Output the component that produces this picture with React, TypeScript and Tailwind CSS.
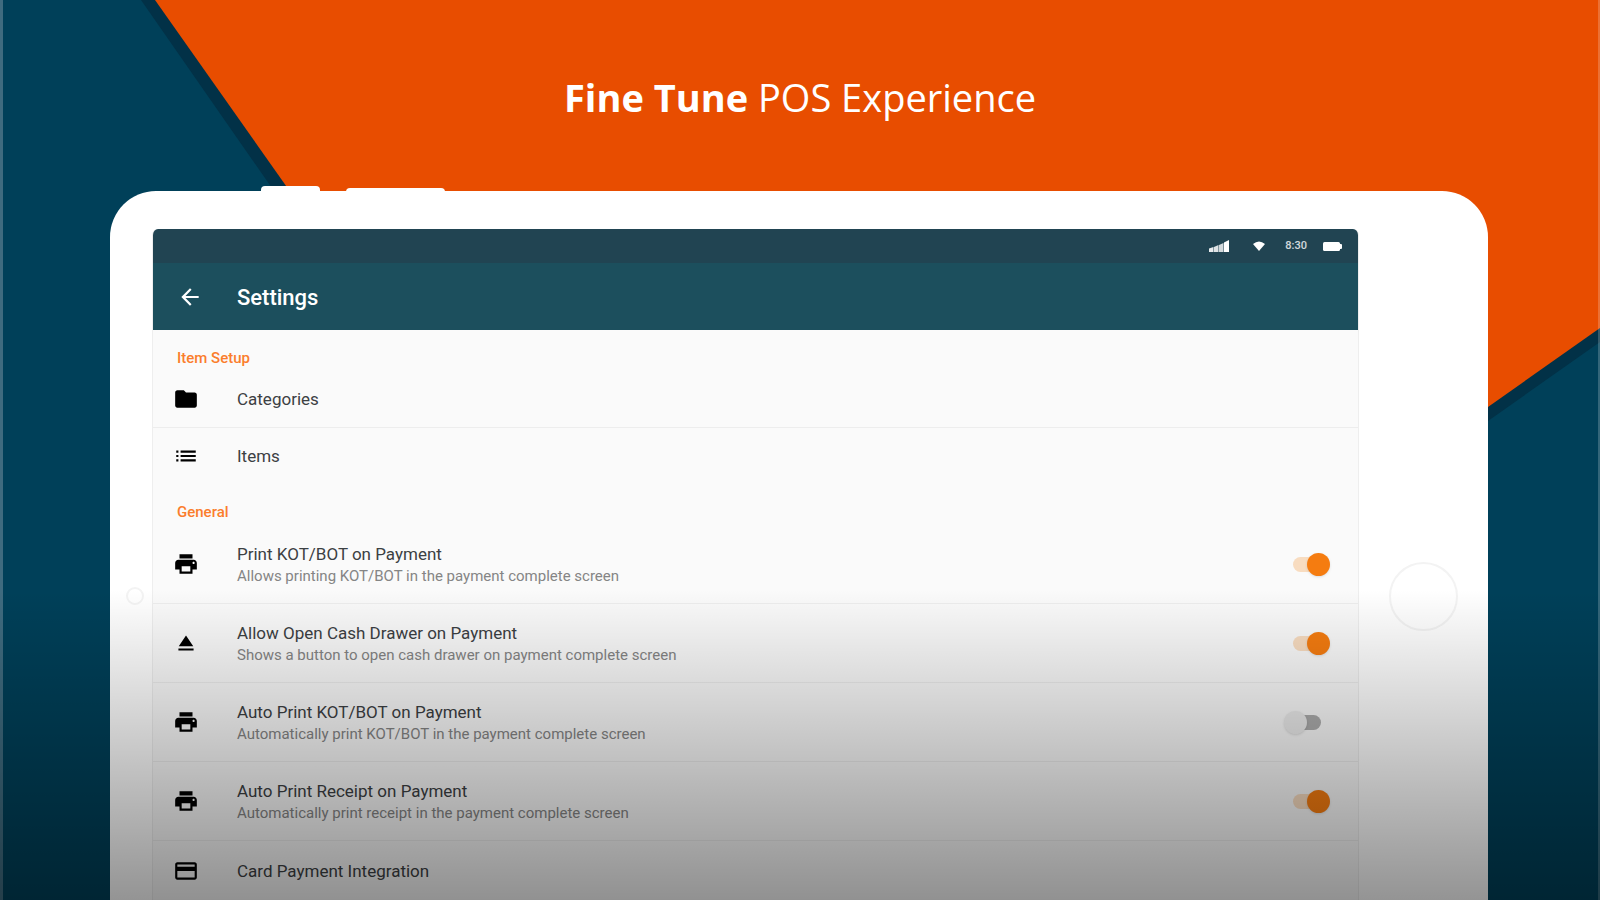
import { useState } from 'react';
import type { IconType } from 'react-icons';
import { MdArrowBack, MdCreditCard, MdEject, MdFolder, MdList, MdPrint } from 'react-icons/md';

type LinkItem = { label: string; icon: IconType };
type ToggleItem = { id: string; label: string; hint: string; icon: IconType; on: boolean };

const setupItems: LinkItem[] = [
  { label: 'Categories', icon: MdFolder },
  { label: 'Items', icon: MdList },
];

const generalItems: ToggleItem[] = [
  {
    id: 'print-kot',
    label: 'Print KOT/BOT on Payment',
    hint: 'Allows printing KOT/BOT in the payment complete screen',
    icon: MdPrint,
    on: true,
  },
  {
    id: 'cash-drawer',
    label: 'Allow Open Cash Drawer on Payment',
    hint: 'Shows a button to open cash drawer on payment complete screen',
    icon: MdEject,
    on: true,
  },
  {
    id: 'auto-kot',
    label: 'Auto Print KOT/BOT on Payment',
    hint: 'Automatically print KOT/BOT in the payment complete screen',
    icon: MdPrint,
    on: false,
  },
  {
    id: 'auto-receipt',
    label: 'Auto Print Receipt on Payment',
    hint: 'Automatically print receipt in the payment complete screen',
    icon: MdPrint,
    on: true,
  },
];

function Backdrop() {
  return (
    <svg
      className="absolute inset-0 h-full w-full"
      viewBox="0 0 1600 900"
      preserveAspectRatio="none"
      aria-hidden="true"
    >
      <rect width="1600" height="900" fill="#004059" />
      <path d="M141 0 L430 415 L1488 421 L1600 342 V0 Z" fill="#023147" />
      <path d="M155 0 L430 390 L1488 407 L1600 328 V0 Z" fill="#e84d00" />
      <rect width="3" height="900" fill="#3f6b7f" />
      <rect x="1598" width="2" height="900" fill="#ffffff" fillOpacity="0.2" />
    </svg>
  );
}

function StatusBar() {
  return (
    <div className="flex h-[34px] items-center justify-end bg-[#214452] pr-4 text-white">
      <svg className="mr-6" width="20" height="12" viewBox="0 0 20 12" fill="currentColor" aria-hidden="true">
        <path d="M0 8.5 L4.5 7 V12 H0 Z" fillOpacity="0.9" />
        <path d="M5 7 L9.5 5 V12 H5 Z" fillOpacity="0.85" />
        <path d="M10 5 L14.5 3 V12 H10 Z" fillOpacity="0.8" />
        <path d="M15 2.5 L20 0 V12 H15 Z" />
      </svg>
      <svg className="mr-5" width="12" height="10" viewBox="0 0 12 10" fill="currentColor" aria-hidden="true">
        <path d="M0 3 Q6 -2 12 3 L6 10 Z" />
      </svg>
      <span className="mr-4 text-[11px] font-medium text-white/80">8:30</span>
      <svg width="19" height="9" viewBox="0 0 19 9" fill="currentColor" aria-hidden="true">
        <rect width="17" height="9" rx="1.5" />
        <rect x="16" y="2" width="3" height="5" rx="1" />
      </svg>
    </div>
  );
}

function SectionTitle({ children }: { children: string }) {
  return (
    <h2 className="h-[41px] pt-[18px] pl-6 text-[15px] leading-5 font-medium text-[#fb7d2c]">{children}</h2>
  );
}

function RowIcon({ icon: Icon }: { icon: IconType }) {
  return (
    <span className="flex w-[84px] shrink-0 pl-5">
      <Icon className="h-[26px] w-[26px] text-black" />
    </span>
  );
}

function LinkRow({ label, icon }: LinkItem) {
  return (
    <a href="#" className="flex h-14 items-center text-[17px] text-[#3c4043]">
      <RowIcon icon={icon} />
      <span className="pt-0.5">{label}</span>
    </a>
  );
}

function ToggleRow({ item, onToggle }: { item: ToggleItem; onToggle: () => void }) {
  return (
    <li className="flex h-[79px] items-center border-b border-black/5">
      <RowIcon icon={item.icon} />
      <label htmlFor={item.id} className="flex-1 pt-0.5">
        <span className="block text-[17px] leading-[22px] text-[#3c4043]">{item.label}</span>
        <span id={`${item.id}-hint`} className="block text-[15px] leading-[22px] text-[#858585]">
          {item.hint}
        </span>
      </label>
      <input
        id={item.id}
        type="checkbox"
        role="switch"
        aria-describedby={`${item.id}-hint`}
        checked={item.on}
        onChange={onToggle}
        className="relative mr-7 h-[23px] w-[46px] appearance-none before:absolute before:top-1 before:left-[9px] before:h-[15px] before:w-7 before:rounded-full before:bg-[#adadad] after:absolute after:top-0 after:left-0 after:h-[23px] after:w-[23px] after:rounded-full after:bg-[#ececec] after:shadow-sm checked:before:bg-[#f8dcc0] checked:after:left-[23px] checked:after:bg-[#f57c10]"
      />
    </li>
  );
}

export default function App() {
  const [items, setItems] = useState(generalItems);

  const toggle = (id: string) => {
    setItems((prev) => prev.map((item) => (item.id === id ? { ...item, on: !item.on } : item)));
  };

  return (
    <div className="relative flex h-screen flex-col overflow-hidden font-['Roboto',sans-serif]">
      <Backdrop />

      <h1 className="relative flex h-[191px] shrink-0 items-center justify-center pt-1 font-['Open_Sans',sans-serif] text-[38px] text-white">
        <span>
          <span className="font-bold">Fine Tune</span> POS Experience
        </span>
      </h1>

      {/* Tablet */}
      <div className="relative mr-28 ml-[110px] flex flex-1 rounded-t-[46px] bg-white pt-[38px]">
        <div className="absolute -top-[5px] left-[151px] h-2 w-[59px] rounded-t-sm bg-white" />
        <div className="absolute -top-[3px] left-[236px] h-2 w-[99px] rounded-t-sm bg-white" />

        <div className="flex w-[42px] shrink-0 justify-center pl-2">
          <div className="mt-[358px] h-[18px] w-[18px] rounded-full border-2 border-[#f3f3f3]" />
        </div>

        <main className="flex-1 overflow-hidden rounded-t-md border-x border-[#eeeeee] bg-[#fafafa]">
          <StatusBar />
          <header className="flex h-[67px] items-center bg-[#1c4f5d] text-white">
            <div className="w-[84px] pl-6">
              <button type="button" aria-label="Back" className="flex">
                <MdArrowBack className="h-[26px] w-[26px]" />
              </button>
            </div>
            <p className="pt-0.5 text-[22px] font-medium">Settings</p>
          </header>

          <SectionTitle>Item Setup</SectionTitle>
          <ul className="divide-y divide-black/5">
            {setupItems.map((item) => (
              <li key={item.label}>
                <LinkRow {...item} />
              </li>
            ))}
          </ul>

          <SectionTitle>General</SectionTitle>
          <ul>
            {items.map((item) => (
              <ToggleRow key={item.id} item={item} onToggle={() => toggle(item.id)} />
            ))}
            <li className="pt-0.5">
              <LinkRow label="Card Payment Integration" icon={MdCreditCard} />
            </li>
          </ul>
        </main>

        <div className="flex w-[129px] shrink-0 justify-center">
          <div className="mt-[333px] h-[69px] w-[69px] rounded-full border-2 border-[#f3f3f3]" />
        </div>
      </div>

      <div className="pointer-events-none absolute inset-x-0 bottom-0 h-[310px] bg-linear-to-t from-black/42 to-transparent" />
    </div>
  );
}
